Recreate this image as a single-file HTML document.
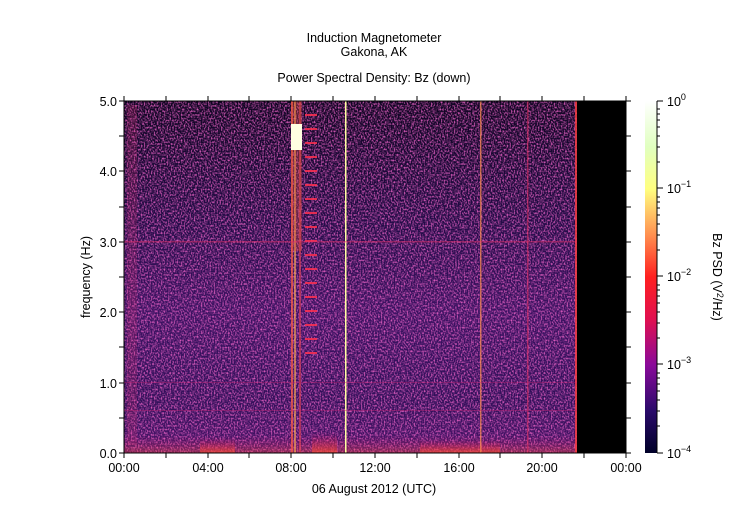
<!DOCTYPE html>
<html><head><meta charset="utf-8"><style>
html,body{margin:0;padding:0;background:#fff}
svg{display:block}
text{font-family:"Liberation Sans","DejaVu Sans",sans-serif;font-size:12.5px;fill:#000}
</style></head><body>
<svg width="749" height="530" viewBox="0 0 749 530" xmlns="http://www.w3.org/2000/svg">
<defs>
<linearGradient id="bg" x1="0" y1="0" x2="0" y2="1">
<stop offset="0" stop-color="#100522"/>
<stop offset="0.35" stop-color="#240c48"/>
<stop offset="0.6" stop-color="#3c1262"/>
<stop offset="0.85" stop-color="#32105a"/>
<stop offset="1" stop-color="#4a1468"/>
</linearGradient>
<filter id="nz" x="0" y="0" width="1" height="1">
<feTurbulence type="fractalNoise" baseFrequency="0.7 0.55" numOctaves="1" seed="3"/>
<feColorMatrix type="matrix" values="0 0 0 0 0.8  0 0 0 0 0.12  0 0 0 0 0.55  2.8 0 0 0 -1.15"/>
</filter>
<linearGradient id="cb" x1="0" y1="1" x2="0" y2="0">
<stop offset="0" stop-color="#000028"/>
<stop offset="0.12" stop-color="#2a0a6a"/>
<stop offset="0.25" stop-color="#8a0a9a"/>
<stop offset="0.38" stop-color="#e01050"/>
<stop offset="0.5" stop-color="#ff2020"/>
<stop offset="0.62" stop-color="#ff9050"/>
<stop offset="0.75" stop-color="#ffff80"/>
<stop offset="0.87" stop-color="#e0ffc0"/>
<stop offset="1" stop-color="#ffffff"/>
</linearGradient>
<linearGradient id="glow" x1="0" y1="1" x2="0" y2="0">
<stop offset="0" stop-color="#ff5030" stop-opacity="0.8"/>
<stop offset="1" stop-color="#c01060" stop-opacity="0"/>
</linearGradient>
</defs>
<text x="374" y="42" text-anchor="middle">Induction Magnetometer</text>
<text x="374" y="56" text-anchor="middle">Gakona, AK</text>
<text x="374" y="82" text-anchor="middle">Power Spectral Density: Bz (down)</text>

<rect x="124" y="101" width="453" height="352" fill="url(#bg)"/>
<rect x="124" y="101" width="453" height="352" filter="url(#nz)" opacity="0.9"/>
<rect x="577" y="101" width="49" height="352" fill="#000"/>
<rect x="124" y="435" width="453" height="18" fill="url(#glow)" opacity="0.45"/>
<rect x="200" y="438" width="35" height="15" fill="url(#glow)" opacity="0.8"/>
<rect x="312" y="432" width="25" height="21" fill="url(#glow)" opacity="0.8"/>
<rect x="420" y="440" width="80" height="13" fill="url(#glow)" opacity="0.8"/>
<rect x="127" y="105" width="10" height="340" fill="#d03070" opacity="0.2"/>
<rect x="291" y="101" width="2" height="352" fill="#ff6040" opacity="0.7"/>
<rect x="294" y="101" width="2" height="352" fill="#ffb050" opacity="0.6"/>
<rect x="299" y="101" width="2" height="352" fill="#e04050" opacity="0.6"/>
<rect x="291" y="101" width="11" height="150" fill="#e05040" opacity="0.35"/>
<rect x="291" y="124" width="11" height="26" fill="#ffffe0"/>
<g fill="#ff3050" opacity="0.85">
<rect x="305" y="114" width="12" height="2"/><rect x="305" y="128" width="12" height="2"/><rect x="305" y="142" width="12" height="2"/><rect x="305" y="156" width="12" height="2"/><rect x="305" y="170" width="12" height="2"/><rect x="305" y="184" width="12" height="2"/><rect x="305" y="198" width="12" height="2"/><rect x="305" y="212" width="12" height="2"/><rect x="305" y="226" width="12" height="2"/><rect x="305" y="240" width="12" height="2"/><rect x="305" y="254" width="12" height="2"/><rect x="305" y="268" width="12" height="2"/><rect x="305" y="282" width="12" height="2"/><rect x="305" y="296" width="12" height="2"/><rect x="305" y="310" width="12" height="2"/><rect x="305" y="324" width="12" height="2"/><rect x="305" y="338" width="12" height="2"/><rect x="305" y="352" width="12" height="2"/>
</g>
<rect x="345" y="101" width="1.5" height="352" fill="#ffffa0"/>
<rect x="480" y="101" width="1.5" height="352" fill="#ff9050" opacity="0.7"/>
<rect x="527" y="101" width="1.5" height="352" fill="#e03060" opacity="0.6"/>
<rect x="575" y="101" width="2" height="352" fill="#ff4040" opacity="0.8"/>
<rect x="124" y="241" width="453" height="1.5" fill="#e0306a" opacity="0.5"/>
<rect x="124" y="382" width="453" height="1" fill="#c02070" opacity="0.4"/>
<rect x="124" y="410" width="453" height="1" fill="#c02070" opacity="0.4"/>

<rect x="124" y="101" width="502" height="352" fill="none" stroke="#000" stroke-width="1"/>
<g stroke="#000" stroke-width="1">
<path d="M124 453v5M166 453v5M208 453v5M249 453v5M291 453v5M333 453v5M375 453v5M417 453v5M459 453v5M500 453v5M542 453v5M584 453v5M626 453v5"/>
<path d="M124 101v-5M166 101v-5M208 101v-5M249 101v-5M291 101v-5M333 101v-5M375 101v-5M417 101v-5M459 101v-5M500 101v-5M542 101v-5M584 101v-5M626 101v-5"/>
<path d="M124 101h-5M124 136h-5M124 171h-5M124 207h-5M124 242h-5M124 277h-5M124 312h-5M124 347h-5M124 383h-5M124 418h-5M124 453h-5"/>
<path d="M626 101h5M626 136h5M626 171h5M626 207h5M626 242h5M626 277h5M626 312h5M626 347h5M626 383h5M626 418h5M626 453h5"/>
</g>
<g text-anchor="end">
<text x="117" y="106">5.0</text><text x="117" y="176">4.0</text><text x="117" y="247">3.0</text><text x="117" y="317">2.0</text><text x="117" y="388">1.0</text><text x="117" y="458">0.0</text>
</g>
<g text-anchor="middle">
<text x="124" y="472">00:00</text><text x="208" y="472">04:00</text><text x="291" y="472">08:00</text><text x="375" y="472">12:00</text><text x="459" y="472">16:00</text><text x="542" y="472">20:00</text><text x="626" y="472">00:00</text>
<text x="374" y="493">06 August 2012 (UTC)</text>
</g>
<text transform="translate(90 277) rotate(-90)" text-anchor="middle">frequency (Hz)</text>

<rect x="645" y="101" width="12" height="352" fill="url(#cb)"/>
<g stroke="#000" stroke-width="1">
<path d="M657 101v352M657 101h6M657 188h6M657 276h6M657 364h6M657 453h6"/>
<path d="M657 109h3M657 114h3M657 120h3M657 127h3M657 136h3M657 147h3M657 162h3M657 197h3M657 202h3M657 208h3M657 215h3M657 224h3M657 235h3M657 250h3M657 285h3M657 290h3M657 296h3M657 303h3M657 312h3M657 323h3M657 338h3M657 373h3M657 378h3M657 384h3M657 391h3M657 400h3M657 411h3M657 426h3"/>
</g>
<g>
<text x="667" y="106">10<tspan dy="-6" font-size="9">0</tspan></text>
<text x="667" y="193">10<tspan dy="-6" font-size="9">−1</tspan></text>
<text x="667" y="281">10<tspan dy="-6" font-size="9">−2</tspan></text>
<text x="667" y="369">10<tspan dy="-6" font-size="9">−3</tspan></text>
<text x="667" y="458">10<tspan dy="-6" font-size="9">−4</tspan></text>
</g>
<text transform="translate(713 277) rotate(90)" text-anchor="middle">Bz PSD (V<tspan dy="-4" font-size="9">2</tspan><tspan dy="4">/Hz)</tspan></text>
</svg>
</body></html>
